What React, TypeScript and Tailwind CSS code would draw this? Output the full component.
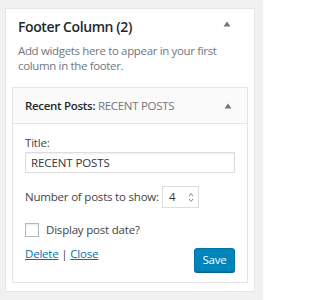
import React from "react";

const Arrow = () => (
  <svg width="8" height="6" viewBox="0 0 8 6" className="block">
    <path d="M4 0.5 L7.5 5.5 L0.5 5.5 Z" fill="#72777c" />
  </svg>
);

export default function App() {
  return (
    <div
      className="w-[263px] h-[300px] bg-[#f1f1f1] pt-[8px] pl-[5px] pr-[8px]"
      style={{ fontFamily: '"Open Sans", "Noto Sans", sans-serif' }}
    >
      <div className="bg-white border border-[#e5e5e5] pt-[9px] px-[6px] pb-[8px]">
        <div className="flex items-start justify-between pl-[6px] pr-[17px]">
          <h2 className="text-[14px] leading-[18px] tracking-[-0.4px] font-semibold text-[#23282d]">Footer Column (2)</h2>
          <div className="mt-[3px]"><Arrow /></div>
        </div>
        <p className="pl-[6px] mt-[7px] text-[11.5px] leading-[15px] tracking-[-0.35px] text-[#72777c]">
          Add widgets here to appear in your first column in the footer.
        </p>
        <div className="mt-[14px] border border-[#e5e5e5] bg-white">
          <div className="h-[36px] bg-[#fafafa] border-b border-[#e5e5e5] flex items-center justify-between pl-[12px] pr-[15px]">
            <div className="text-[11.5px] tracking-[-0.3px] text-[#23282d]">
              <span className="font-semibold">Recent Posts:</span>
              <span className="text-[#72777c]"> RECENT POSTS</span>
            </div>
            <Arrow />
          </div>
          <div className="px-[12px] pt-[11px] pb-[10px]">
            <div className="text-[11.5px] leading-[16px] tracking-[-0.2px] text-[#444]">Title:</div>
            <div className="mt-[1px] h-[21px] border border-[#ddd] shadow-[inset_0_1px_2px_rgba(0,0,0,0.07)] flex items-center px-[5px] text-[11.5px] tracking-[-0.1px] text-[#32373c]">
              RECENT POSTS
            </div>
            <div className="mt-[13px] flex items-center gap-[3px] text-[11.5px] tracking-[-0.2px] text-[#444]">
              <span>Number of posts to show:</span>
              <div className="w-[37px] h-[22px] border border-[#ddd] flex items-center justify-between pl-[6px] pr-[4px] text-[#32373c]">
                <span>4</span>
                <svg width="6" height="11" viewBox="0 0 6 11">
                  <path d="M1 4 L3 1.5 L5 4" stroke="#888" strokeWidth="1" fill="none" />
                  <path d="M1 7 L3 9.5 L5 7" stroke="#888" strokeWidth="1" fill="none" />
                </svg>
              </div>
            </div>
            <div className="mt-[14px] h-[16px] flex items-center gap-[7px] text-[11.5px] tracking-[-0.2px] text-[#444]">
              <div className="w-[14px] h-[14px] border border-[#b4b9be] shadow-[inset_0_1px_2px_rgba(0,0,0,0.1)]" />
              <span>Display post date?</span>
            </div>
            <div className="mt-[10px] flex items-start justify-between">
              <div className="-mt-[1px] leading-[14px] text-[11.5px] tracking-[-0.2px] text-[#0073aa]">
                <span className="underline">Delete</span>
                <span className="text-[#444]"> | </span>
                <span className="underline">Close</span>
              </div>
              <button className="w-[41px] h-[24px] rounded-[3px] bg-[#0085ba] border border-[#0073aa] text-white text-[11.5px] tracking-[-0.2px] shadow-[0_1px_0_#006799]">
                Save
              </button>
            </div>
          </div>
        </div>
      </div>
    </div>
  );
}
